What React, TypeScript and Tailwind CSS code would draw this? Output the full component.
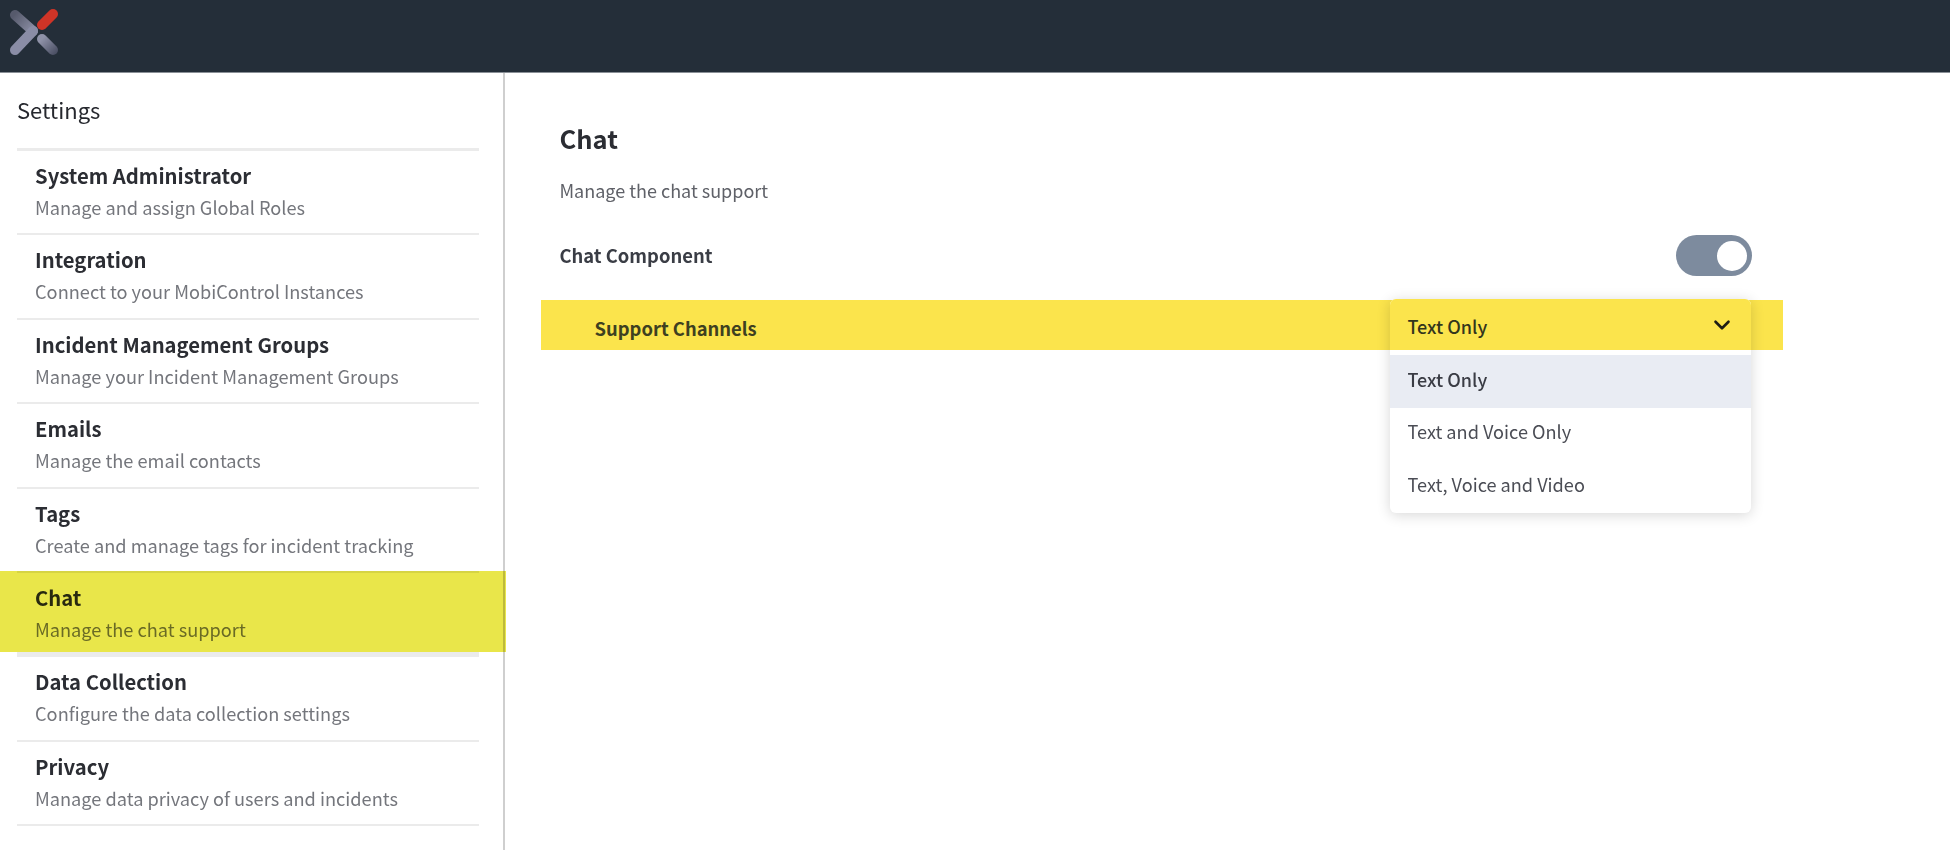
import React from 'react';
import { ChevronDown } from 'lucide-react';

const items = [
  { title: 'System Administrator', desc: 'Manage and assign Global Roles' },
  { title: 'Integration', desc: 'Connect to your MobiControl Instances' },
  { title: 'Incident Management Groups', desc: 'Manage your Incident Management Groups' },
  { title: 'Emails', desc: 'Manage the email contacts' },
  { title: 'Tags', desc: 'Create and manage tags for incident tracking' },
  { title: 'Chat', desc: 'Manage the chat support' },
  { title: 'Data Collection', desc: 'Configure the data collection settings' },
  { title: 'Privacy', desc: 'Manage data privacy of users and incidents' },
];

function Logo() {
  return (
    <svg width="64" height="64" viewBox="0 0 64 64" fill="none" className="ml-[3px] mt-[2px] blur-[0.5px]">
      <defs>
        <linearGradient id="armA" x1="12" y1="12" x2="36" y2="32" gradientUnits="userSpaceOnUse">
          <stop offset="0" stopColor="#565a6c" />
          <stop offset="1" stopColor="#9a9db4" />
        </linearGradient>
        <linearGradient id="armB" x1="40" y1="36" x2="56" y2="52" gradientUnits="userSpaceOnUse">
          <stop offset="0" stopColor="#8f92a8" />
          <stop offset="1" stopColor="#41465a" />
        </linearGradient>
      </defs>
      <path d="M12 13 L30 29" stroke="url(#armA)" strokeWidth="10" strokeLinecap="round" />
      <path d="M30 29 L12 48" stroke="#8a8da6" strokeWidth="10" strokeLinecap="round" />
      <path d="M39 37 L50 48" stroke="url(#armB)" strokeWidth="10" strokeLinecap="round" />
      <path d="M39 23 L50 12" stroke="#cf3427" strokeWidth="10" strokeLinecap="round" />
    </svg>
  );
}

function SidebarItem({ title, desc, active }: { title: string; desc: string; active: boolean }) {
  return (
    <div className="relative h-[84.4px] border-b-2 border-[#ebebeb] pl-[18px] pt-[11px]">
      {active && <div className="absolute left-0 right-0 bottom-[-2px] h-[5px] bg-[#ebebeb]" />}
      {active && <div className="absolute -left-[17px] right-[-27px] top-[-2px] h-[81px] bg-[#e9e64a] mix-blend-multiply" />}
      <div className="text-[20.25px] leading-[28px] font-semibold text-[#2b2d33]">{title}</div>
      <div className="text-[18.2px] leading-[26px] mt-[4px] text-[#74767c]">{desc}</div>
    </div>
  );
}

export default function App() {
  return (
    <div className="w-[1950px] h-[850px] overflow-hidden bg-white flex flex-col font-['Noto_Sans_CJK_SC','Source_Sans_Pro',sans-serif]">
      <header className="h-[73px] shrink-0 bg-[#242e39] border-b border-[#8a9097] flex items-start">
        <Logo />
      </header>
      <div className="flex flex-1 min-h-0">
        <aside className="w-[505px] shrink-0 border-r-2 border-[#cfcfcf] pl-[17px] pr-[24px]">
          <h2 className="text-[22px] leading-[32px] text-[#26282e] mt-[20px] mb-[23px]">Settings</h2>
          <div className="border-t-[3px] border-[#ebebeb]">
            {items.map(item => (
              <SidebarItem key={item.title} title={item.title} desc={item.desc} active={item.title === 'Chat'} />
            ))}
          </div>
        </aside>
        <main className="flex-1 pl-[36px] pt-[48px]">
          <div className="w-[1242px]">
            <div className="pl-[18.5px] pr-[31px]">
              <h1 className="text-[25.5px] leading-[34px] font-semibold text-[#2b2d33]">Chat</h1>
              <p className="text-[18px] leading-[26px] text-[#5f6168] mt-[22px]">Manage the chat support</p>
              <div className="flex items-center justify-between mt-[32px] h-[41px]">
                <span className="text-[18.4px] font-semibold text-[#3a3d45]">Chat Component</span>
                <div className="w-[76px] h-[41px] rounded-full bg-[#7d8b9e] flex items-center justify-end pr-[5px]">
                  <div className="w-[30px] h-[30px] rounded-full bg-white" />
                </div>
              </div>
            </div>
            <div className="relative mt-[24px] h-[50px] bg-[#fbe44c] flex items-center pl-[53.5px]">
              <span className="text-[18.4px] font-semibold text-[#3e4020] pt-[7px]">Support Channels</span>
              <div className="absolute left-[849px] top-[-1px] w-[361px] h-[214px] rounded-[6px] bg-white shadow-[0_2px_14px_rgba(0,0,0,0.16)] flex flex-col">
                <div className="h-[51px] shrink-0 rounded-t-[6px] bg-[#fbe44c] flex items-center justify-between pl-[17.5px] pr-[16px] text-[18px] font-medium text-[#33351c]">
                  <span className="pt-[3px]">Text Only</span>
                  <ChevronDown size={26} strokeWidth={2.4} className="text-[#1d1d14]" />
                </div>
                <div className="mt-[5px] h-[53px] bg-[#e9ecf3] flex items-center pl-[17.5px] pb-[4px] text-[18px] font-medium text-[#3a3c44]">Text Only</div>
                <div className="h-[52px] flex items-center pl-[17.5px] pb-[4px] text-[18.15px] text-[#4b4d55]">Text and Voice Only</div>
                <div className="h-[53px] flex items-center pl-[17.5px] pb-[4px] text-[18.15px] text-[#4b4d55]">Text, Voice and Video</div>
              </div>
            </div>
          </div>
        </main>
      </div>
    </div>
  );
}
